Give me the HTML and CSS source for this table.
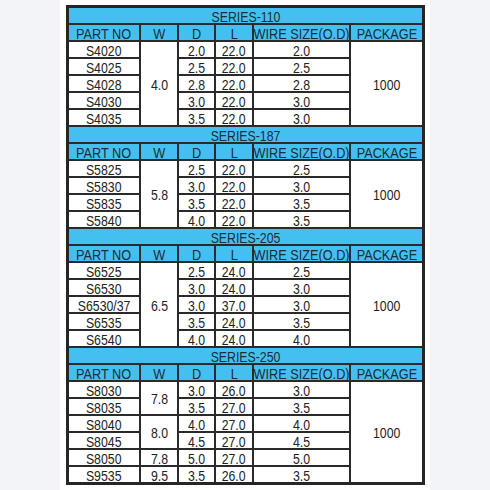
FILE: index.html
```html
<!DOCTYPE html>
<html>
<head>
<meta charset="utf-8">
<link rel="stylesheet" href="styles.css">
</head>
<body>
<div class="page">
  <div class="sheet">
    <div class="series"><span>SERIES-110</span></div>
    <div class="hd"><span>PART NO</span></div><div class="hd"><span>W</span></div><div class="hd"><span>D</span></div><div class="hd"><span>L</span></div><div class="hd"><span>WIRE SIZE(O.D)</span></div><div class="hd"><span>PACKAGE</span></div>
    <div class="c"><span>S4020</span></div><div class="c span5"><span>4.0</span></div><div class="c"><span>2.0</span></div><div class="c"><span>22.0</span></div><div class="c"><span>2.0</span></div><div class="c span5"><span>1000</span></div>
    <div class="c"><span>S4025</span></div><div class="c"><span>2.5</span></div><div class="c"><span>22.0</span></div><div class="c"><span>2.5</span></div>
    <div class="c"><span>S4028</span></div><div class="c"><span>2.8</span></div><div class="c"><span>22.0</span></div><div class="c"><span>2.8</span></div>
    <div class="c"><span>S4030</span></div><div class="c"><span>3.0</span></div><div class="c"><span>22.0</span></div><div class="c"><span>3.0</span></div>
    <div class="c"><span>S4035</span></div><div class="c"><span>3.5</span></div><div class="c"><span>22.0</span></div><div class="c"><span>3.0</span></div>

    <div class="series"><span>SERIES-187</span></div>
    <div class="hd"><span>PART NO</span></div><div class="hd"><span>W</span></div><div class="hd"><span>D</span></div><div class="hd"><span>L</span></div><div class="hd"><span>WIRE SIZE(O.D)</span></div><div class="hd"><span>PACKAGE</span></div>
    <div class="c"><span>S5825</span></div><div class="c span4"><span>5.8</span></div><div class="c"><span>2.5</span></div><div class="c"><span>22.0</span></div><div class="c"><span>2.5</span></div><div class="c span4"><span>1000</span></div>
    <div class="c"><span>S5830</span></div><div class="c"><span>3.0</span></div><div class="c"><span>22.0</span></div><div class="c"><span>3.0</span></div>
    <div class="c"><span>S5835</span></div><div class="c"><span>3.5</span></div><div class="c"><span>22.0</span></div><div class="c"><span>3.5</span></div>
    <div class="c"><span>S5840</span></div><div class="c"><span>4.0</span></div><div class="c"><span>22.0</span></div><div class="c"><span>3.5</span></div>

    <div class="series"><span>SERIES-205</span></div>
    <div class="hd"><span>PART NO</span></div><div class="hd"><span>W</span></div><div class="hd"><span>D</span></div><div class="hd"><span>L</span></div><div class="hd"><span>WIRE SIZE(O.D)</span></div><div class="hd"><span>PACKAGE</span></div>
    <div class="c"><span>S6525</span></div><div class="c span5"><span>6.5</span></div><div class="c"><span>2.5</span></div><div class="c"><span>24.0</span></div><div class="c"><span>2.5</span></div><div class="c span5"><span>1000</span></div>
    <div class="c"><span>S6530</span></div><div class="c"><span>3.0</span></div><div class="c"><span>24.0</span></div><div class="c"><span>3.0</span></div>
    <div class="c"><span>S6530/37</span></div><div class="c"><span>3.0</span></div><div class="c"><span>37.0</span></div><div class="c"><span>3.0</span></div>
    <div class="c"><span>S6535</span></div><div class="c"><span>3.5</span></div><div class="c"><span>24.0</span></div><div class="c"><span>3.5</span></div>
    <div class="c"><span>S6540</span></div><div class="c"><span>4.0</span></div><div class="c"><span>24.0</span></div><div class="c"><span>4.0</span></div>

    <div class="series"><span>SERIES-250</span></div>
    <div class="hd"><span>PART NO</span></div><div class="hd"><span>W</span></div><div class="hd"><span>D</span></div><div class="hd"><span>L</span></div><div class="hd"><span>WIRE SIZE(O.D)</span></div><div class="hd"><span>PACKAGE</span></div>
    <div class="c"><span>S8030</span></div><div class="c span2"><span>7.8</span></div><div class="c"><span>3.0</span></div><div class="c"><span>26.0</span></div><div class="c"><span>3.0</span></div><div class="c span6"><span>1000</span></div>
    <div class="c"><span>S8035</span></div><div class="c"><span>3.5</span></div><div class="c"><span>27.0</span></div><div class="c"><span>3.5</span></div>
    <div class="c"><span>S8040</span></div><div class="c span2"><span>8.0</span></div><div class="c"><span>4.0</span></div><div class="c"><span>27.0</span></div><div class="c"><span>4.0</span></div>
    <div class="c"><span>S8045</span></div><div class="c"><span>4.5</span></div><div class="c"><span>27.0</span></div><div class="c"><span>4.5</span></div>
    <div class="c"><span>S8050</span></div><div class="c"><span>7.8</span></div><div class="c"><span>5.0</span></div><div class="c"><span>27.0</span></div><div class="c"><span>5.0</span></div>
    <div class="c"><span>S9535</span></div><div class="c"><span>9.5</span></div><div class="c"><span>3.5</span></div><div class="c"><span>26.0</span></div><div class="c"><span>3.5</span></div>
  </div>
</div>
</body>
</html>
```
FILE: styles.css
```css
html, body {
  margin: 0;
  padding: 0;
  background: #f2f4f7;
}
body {
  width: 490px;
  height: 490px;
  overflow: hidden;
}
.page {
  width: 370px;
  height: 490px;
  margin: 0 auto;
  background: #ffffff;
  padding: 5px 5px 0 6px;
  box-sizing: border-box;
}
.sheet {
  display: grid;
  grid-template-columns: 70px 36px 35px 36px 95px 71px;
  grid-auto-rows: 15px;
  gap: 2px;
  width: 353px;
  border: 3px solid #262626;
  background: #2a2a2a;
  font-family: "Liberation Sans", Arial, sans-serif;
  font-size: 15px;
  line-height: 15px;
  color: #222222;
}
.sheet > div {
  display: flex;
  align-items: center;
  justify-content: center;
  white-space: nowrap;
  overflow: hidden;
}
.sheet span {
  display: inline-block;
  transform: scaleX(0.82);
  transform-origin: center;
  padding-top: 1px;
}
.series {
  grid-column: 1 / -1;
  background: #44c0f0;
  color: #1c2c3a;
}
.hd {
  background: #44c0f0;
  color: #1c2c3a;
}
.hd span {
  font-size: 15.5px;
}
.c {
  background: #ffffff;
}
.span2 { grid-row: span 2; }
.span4 { grid-row: span 4; }
.span5 { grid-row: span 5; }
.span6 { grid-row: span 6; }
```
